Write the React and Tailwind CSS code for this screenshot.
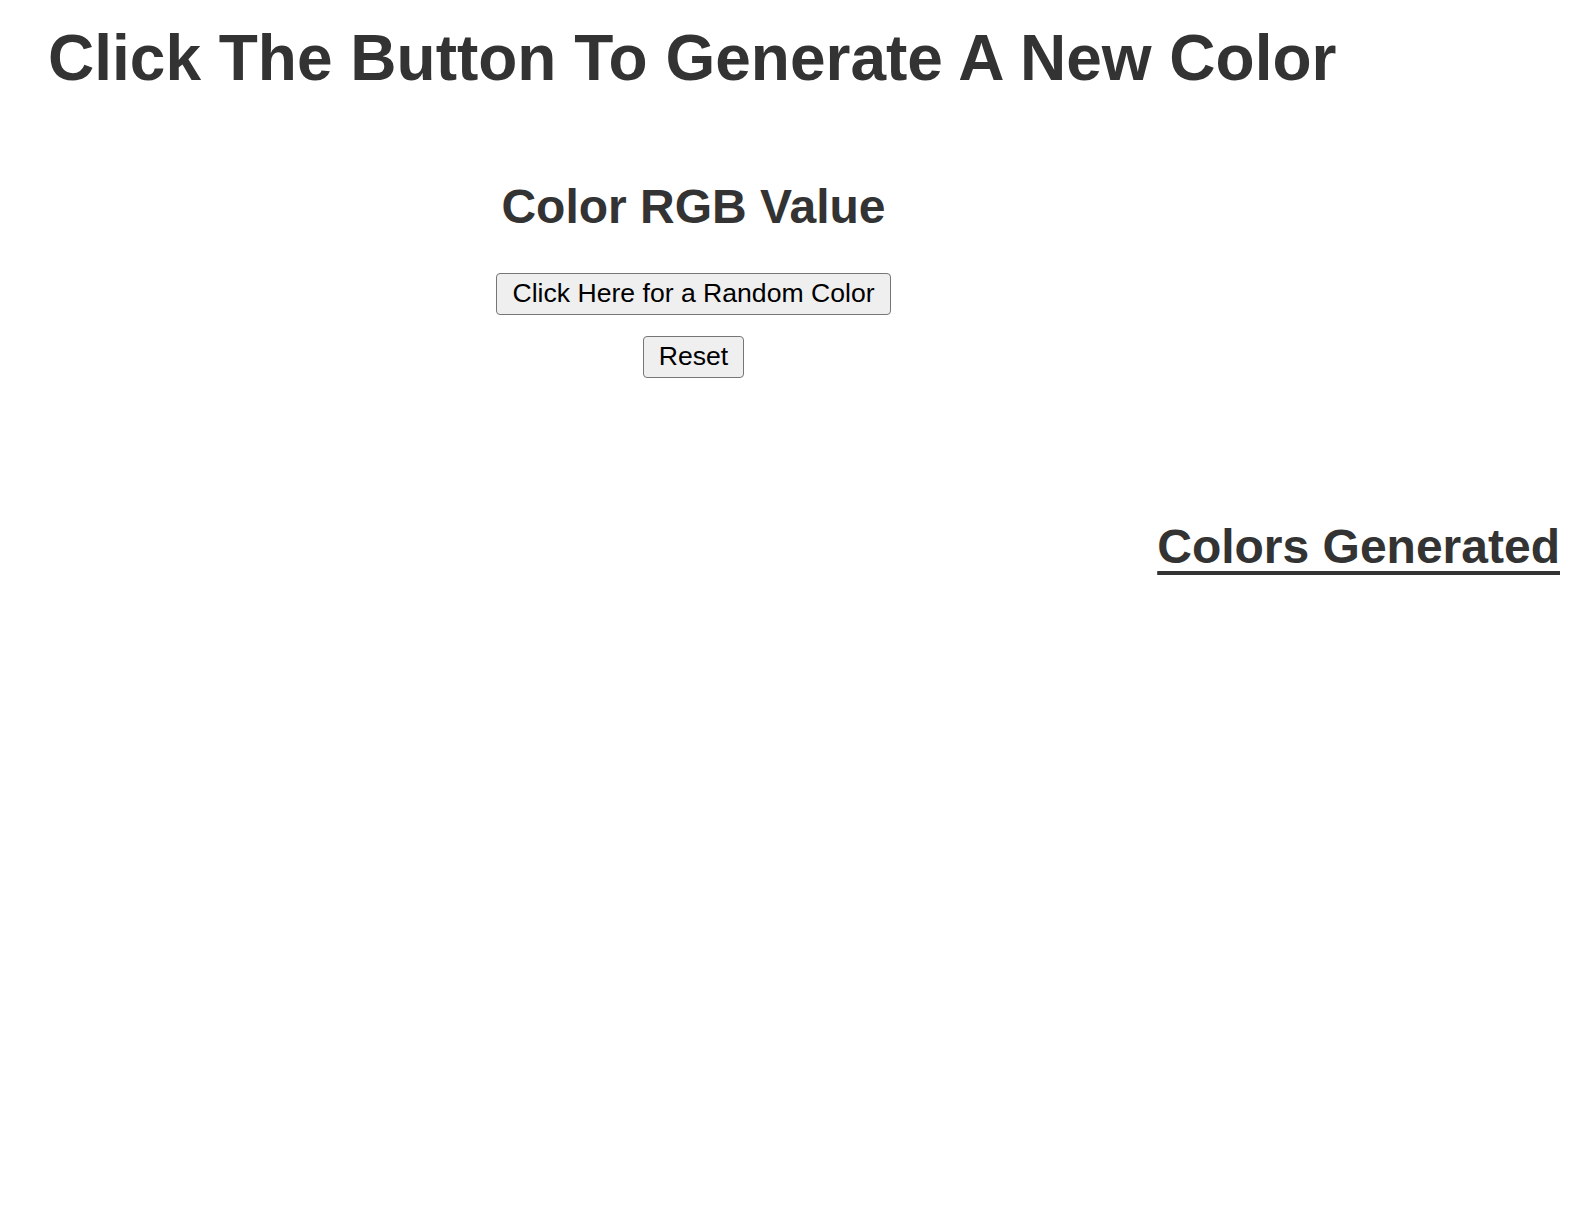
export default function App() {
  return (
    <div className="min-h-[1210px] bg-white font-['Liberation_Sans',Arial,sans-serif] text-[#333]">
      <div className="flex w-[1339px] flex-col pl-[48px] pt-[23px]">
        <h1 className="text-[64px] font-bold leading-[71.5px]">Click The Button To Generate A New Color</h1>

        <div className="mt-[85px] flex flex-col items-center">
          <h2 className="text-[48px] font-bold leading-[53.6px]">Color RGB Value</h2>
          <button
            type="button"
            className="mt-[40px] flex h-[42px] items-center rounded-[4px] border border-[#767676] bg-[#efefef] px-[15px] text-[26.6px] text-black"
          >
            Click Here for a Random Color
          </button>
          <button
            type="button"
            className="mt-[21px] flex h-[42px] items-center rounded-[4px] border border-[#767676] bg-[#efefef] px-[15px] text-[26.6px] text-black"
          >
            Reset
          </button>
        </div>
      </div>

      <div className="mt-[142px] flex justify-end pr-[23px]">
        <h2 className="text-[48px] font-bold leading-[53.6px] underline decoration-4 underline-offset-[8px]">Colors Generated</h2>
      </div>
    </div>
  );
}
